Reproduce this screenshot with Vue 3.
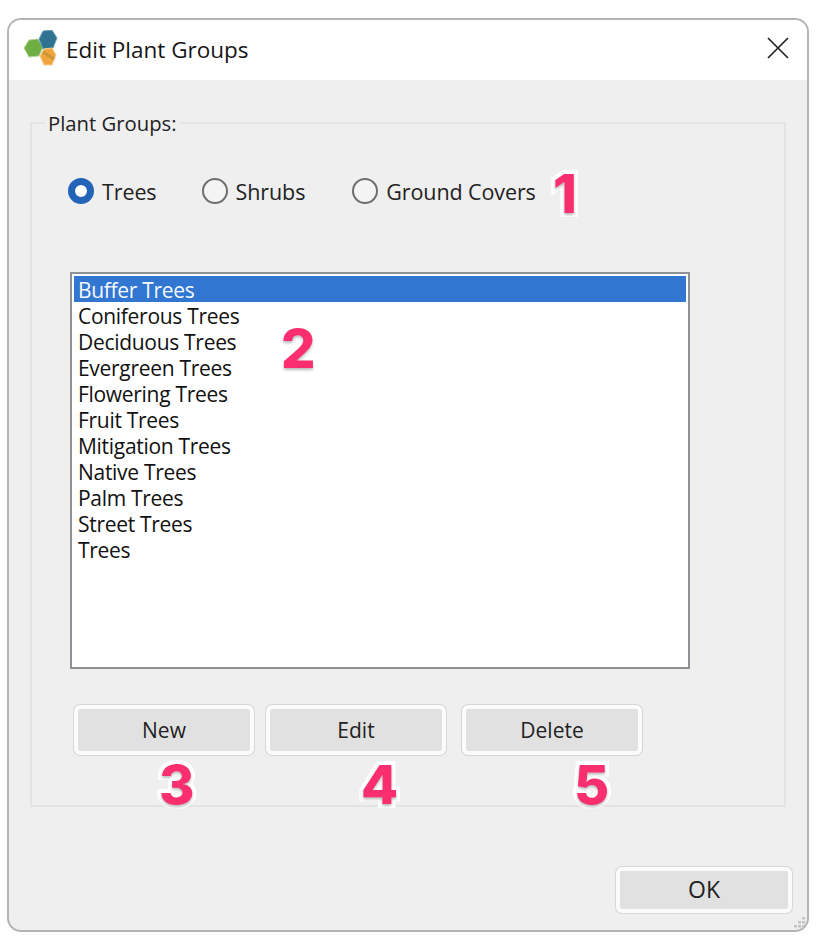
<script setup>
const groups = [
  { label: 'Trees', checked: true, cls: 'r-trees' },
  { label: 'Shrubs', checked: false, cls: 'r-shrubs' },
  { label: 'Ground Covers', checked: false, cls: 'r-ground' },
]
const items = ['Buffer Trees','Coniferous Trees','Deciduous Trees','Evergreen Trees','Flowering Trees','Fruit Trees','Mitigation Trees','Native Trees','Palm Trees','Street Trees','Trees']
const actions = ['New','Edit','Delete']
const grip = [[10,1],[6,5],[10,5],[2,9],[6,9],[10,9]]
</script>

<template>
  <div class="page">
    <div class="window">
      <header class="titlebar">
        <svg class="logo" width="36" height="36" viewBox="0 0 36 36">
          <polygon points="1,18 6,10 15,9 20,17 16,26 6,27" fill="#6fae45" stroke="#b5d69c" stroke-width="1"/>
          <polygon points="16,9 20,1 29,0 34,8 30,18 20,19" fill="#2f7390" stroke="#6fa3b8" stroke-width="1"/>
          <polygon points="17,26 21,19 29,18 33,25 29,35 21,35" fill="#f0a63c" stroke="#f8cf8e" stroke-width="1"/>
          <path d="M20 22 L31 29" stroke="#c9963a" stroke-width="3"/>
        </svg>
        <span class="title">Edit Plant Groups</span>
        <svg class="close" width="22" height="22" viewBox="0 0 22 22">
          <path d="M1 1 L21 21 M21 1 L1 21" stroke="#222" stroke-width="1.7" fill="none"/>
        </svg>
      </header>
      <main class="body">
        <fieldset class="group">
          <legend class="legend">Plant Groups:</legend>
          <div class="radios">
            <label v-for="g in groups" :key="g.label" class="radio" :class="g.cls">
              <span class="dot" :class="{ on: g.checked }"></span>
              <span>{{ g.label }}</span>
            </label>
            <span class="num n1">1</span>
          </div>
          <div class="list">
            <div v-for="(it, i) in items" :key="it" class="item" :class="{ sel: i === 0 }">{{ it }}</div>
            <span class="num n2">2</span>
          </div>
          <div class="actions">
            <button v-for="a in actions" :key="a" class="btn">{{ a }}</button>
            <span class="num n3">3</span>
            <span class="num n4">4</span>
            <span class="num n5">5</span>
          </div>
        </fieldset>
        <div class="footer">
          <button class="btn ok">OK</button>
        </div>
        <svg class="grip" width="14" height="12" viewBox="0 0 14 12">
          <rect v-for="(p, i) in grip" :key="i" :x="p[0]" :y="p[1]" width="3" height="2.5" fill="#c4c4c4"/>
        </svg>
      </main>
    </div>
  </div>
</template>

<style>
html, body { margin: 0; background: #fff; }
</style>

<style scoped>
.page {
  width: 818px;
  height: 942px;
  padding: 18px 0 0 7px;
  box-sizing: border-box;
  background: #fff;
  font-family: "Open Sans", "Noto Sans", sans-serif;
  color: #1a1a1a;
  overflow: hidden;
}
.window {
  width: 802px;
  height: 914px;
  box-sizing: border-box;
  border: 2px solid #b4b4b4;
  border-radius: 14px;
  overflow: hidden;
  background: #efefef;
  display: flex;
  flex-direction: column;
}
.titlebar {
  height: 60px;
  flex: none;
  background: #fff;
  display: flex;
  align-items: center;
  padding: 0 18px 0 14px;
  box-sizing: border-box;
}
.logo { flex: none; margin-top: -4px; }
.title { margin-left: 7px; font-size: 22.5px; color: #161616; margin-top: -2px; }
.close { margin-left: auto; margin-top: -5px; }
.body {
  position: relative;
  flex: 1;
  padding: 29px 21px 0 21px;
  font-size: 21px;
}
.group {
  margin: 0;
  height: 698px;
  box-sizing: border-box;
  padding: 0 0 0 40px;
  border: 2px solid #e4e4e4;
  position: relative;
  min-width: 0;
}
.legend {
  margin-left: -27px;
  padding: 0 3px;
  line-height: 28px;
  font-size: 20.3px;
  color: #222;
}
.radios {
  position: relative;
  display: flex;
  align-items: center;
  height: 34px;
  margin-top: 37px;
  margin-left: -4px;
  font-size: 21.5px;
  letter-spacing: -0.1px;
  color: #222;
}
.radio { display: flex; align-items: center; gap: 8px; }
.r-shrubs { margin-left: 45px; }
.r-ground { margin-left: 47px; }
.dot {
  width: 26px;
  height: 26px;
  box-sizing: border-box;
  border-radius: 50%;
  border: 2px solid #6e6e6e;
  background: #f4f4f4;
}
.dot.on {
  border: 7.5px solid #2364b8;
  background: #fff;
}
.list {
  position: relative;
  margin-top: 64px;
  margin-left: -2px;
  width: 620px;
  height: 397px;
  box-sizing: border-box;
  border: 2px solid #8e9196;
  background: #fff;
  padding: 2px;
  font-size: 21px;
  letter-spacing: -0.3px;
}
.item {
  height: 26px;
  line-height: 28px;
  padding-left: 4px;
  color: #111;
}
.item.sel { background: #3176d0; color: #f4f8ff; }
.actions {
  position: relative;
  display: flex;
  margin-top: 36px;
  margin-left: 2px;
  gap: 12px;
}
.btn {
  width: 180px;
  height: 50px;
  box-sizing: border-box;
  border: 4px solid #fbfbfb;
  border-radius: 6px;
  box-shadow: 0 0 0 1px #d6d6d6;
  background: #e1e1e1;
  font: inherit;
  font-size: 21px;
  color: #222;
  padding: 0;
}
.actions .btn:last-of-type { margin-left: 4px; }
.footer {
  display: flex;
  justify-content: flex-end;
  margin-top: 60px;
  margin-right: -6px;
}
.ok { width: 176px; height: 46px; font-size: 23px; padding-bottom: 3px; }
.grip { position: absolute; right: 1px; bottom: 2px; }
.num {
  position: absolute;
  font-family: "Inter", sans-serif;
  font-weight: 800;
  font-size: 54px;
  line-height: 50px;
  letter-spacing: 0;
  color: #fb2f70;
  -webkit-text-stroke: 8px #fff;
  paint-order: stroke fill;
  text-shadow: 0 2px 3px rgba(0,0,0,.28);
}
.n1 { left: 485px; top: -5px; }
.n2 { left: 209px; top: 50px; }
.n3 { left: 85px; top: 55px; }
.n4 { left: 287px; top: 55px; }
.n5 { left: 500px; top: 55px; }
</style>
